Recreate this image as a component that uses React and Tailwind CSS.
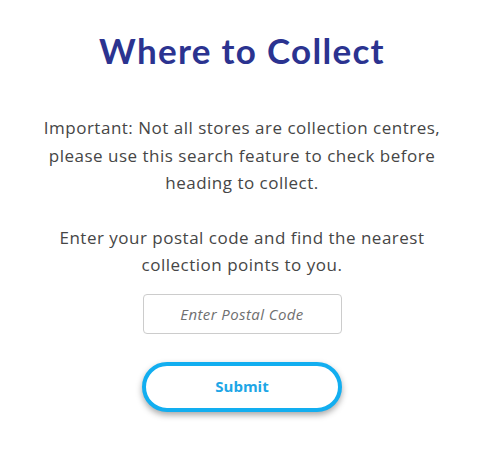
export default function App() {
  return (
    <div className="min-h-screen w-full bg-white flex flex-col items-center pr-[20px]" style={{ fontFamily: "'Open Sans', sans-serif" }}>
      <h1 className="mt-[28px] text-[35px] leading-[44px] font-bold text-[#2b3390] tracking-[1.3px]" style={{ fontFamily: "'Lato', sans-serif" }}>
        Where to Collect
      </h1>
      <p className="mt-[42px] text-center text-[17px] leading-[27.5px] tracking-[0.5px] text-[#464646]">
        Important: Not all stores are collection centres,
        <br />
        please use this search feature to check before
        <br />
        heading to collect.
      </p>
      <p className="mt-[27px] text-center text-[17px] leading-[27.5px] tracking-[0.5px] text-[#464646]">
        Enter your postal code and find the nearest
        <br />
        collection points to you.
      </p>
      <input
        type="text"
        placeholder="Enter Postal Code"
        className="mt-[15px] w-[199px] h-[40px] border border-[#cccccc] rounded-[4px] text-center text-[15px] tracking-[0.4px] italic placeholder:text-[#707070] outline-none"
      />
      <button className="mt-[28px] w-[200px] h-[50px] rounded-full border-[4px] border-[#12aef0] bg-white text-[#1ea6e6] font-bold text-[15px] shadow-[0_3px_6px_rgba(0,0,0,0.35)]">
        Submit
      </button>
    </div>
  );
}
